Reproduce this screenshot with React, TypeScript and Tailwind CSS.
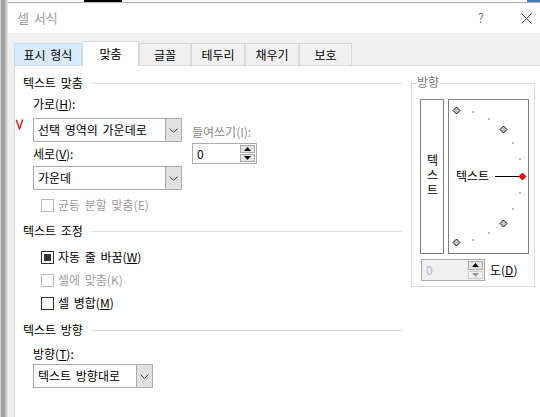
import React from 'react'

const tabs = [
  { label: '표시 형식', cls: 'w-[68px] h-[22px] bg-[#d8eaf9] border-[#c9dff2]' },
  { label: '맞춤', cls: 'w-[57px] h-[25px] bg-white border-[#d9d9d9] -mb-px relative z-10' },
  { label: '글꼴', cls: 'w-[52px] h-[22px] bg-[#f0f0f0] border-[#d9d9d9]' },
  { label: '테두리', cls: 'w-[54px] h-[22px] bg-[#f0f0f0] border-[#d9d9d9]' },
  { label: '채우기', cls: 'w-[54px] h-[22px] bg-[#f0f0f0] border-[#d9d9d9]' },
  { label: '보호', cls: 'w-[53px] h-[22px] bg-[#f0f0f0] border-[#d9d9d9]' },
]

function Chevron() {
  return (
    <svg width="9" height="5" viewBox="0 0 9 5">
      <path d="M0.5 0.5 L4.5 4.5 L8.5 0.5" fill="none" stroke="#505050" strokeWidth="1" />
    </svg>
  )
}

function Select({ value, className }: { value: string; className: string }) {
  return (
    <div className={`flex h-[24px] border border-[#acacac] bg-white ${className}`}>
      <div className="flex-1 flex items-center pl-[4px]">{value}</div>
      <div className="w-[16px] bg-[#e1e1e1] border-l border-[#acacac] flex items-center justify-center">
        <Chevron />
      </div>
    </div>
  )
}

function Arrow({ up, color }: { up: boolean; color: string }) {
  return (
    <svg width="7" height="4" viewBox="0 0 7 4">
      <path d={up ? 'M0 4 L3.5 0 L7 4 Z' : 'M0 0 L3.5 4 L7 0 Z'} fill={color} />
    </svg>
  )
}

function Spin({ disabled, className }: { disabled?: boolean; className: string }) {
  return (
    <div className={`flex border border-[#acacac] ${disabled ? 'bg-[#f0f0f0]' : 'bg-white'} ${className}`}>
      <div className={`flex-1 flex items-center pl-[4px] ${disabled ? 'text-[#a8b8cc]' : 'text-black'}`}>0</div>
      <div className="w-[17px] flex flex-col gap-px p-px">
        <div className="flex-1 bg-[#e5e5e5] border border-[#acacac] flex items-center justify-center">
          <Arrow up color="#000" />
        </div>
        <div className={`flex-1 border flex items-center justify-center ${disabled ? 'bg-[#f0f0f0] border-[#cfcfcf]' : 'bg-[#e5e5e5] border-[#acacac]'}`}>
          <Arrow up={false} color={disabled ? '#9a9a9a' : '#000'} />
        </div>
      </div>
    </div>
  )
}

function Check({ checked, disabled }: { checked?: boolean; disabled?: boolean }) {
  return (
    <div className={`w-[13px] h-[13px] border bg-white flex items-center justify-center ${disabled ? 'border-[#bcbcbc]' : 'border-[#333333]'}`}>
      {checked && <div className="w-[7px] h-[7px] bg-[#333333]" />}
    </div>
  )
}

function CheckRow({ label, checked, disabled, className }: { label: React.ReactNode; checked?: boolean; disabled?: boolean; className: string }) {
  return (
    <div className={`flex items-center h-[18px] pl-[18px] gap-[4px] ${disabled ? 'text-[#a0a0a0]' : 'text-black'} ${className}`}>
      <Check checked={checked} disabled={disabled} />
      <span>{label}</span>
    </div>
  )
}

function Header({ label, className }: { label: string; className: string }) {
  return (
    <div className={`flex items-center h-[18px] ${className}`}>
      <span className="w-[69px] shrink-0">{label}</span>
      <div className="flex-1 h-px bg-[#dcdcdc]" />
    </div>
  )
}

function Dial() {
  const cx = 7
  const cy = 76
  const r = 66
  const pt = (deg: number) => {
    const a = (deg * Math.PI) / 180
    return { x: cx + r * Math.cos(a), y: cy - r * Math.sin(a) }
  }
  const diamonds = [90, 45, -45, -90]
  const dots = [75, 60, 30, 15, -15, -30, -60, -75]
  const red = pt(0)
  return (
    <div className="relative w-[81px] h-[155px] border border-[#828282] bg-white">
      <svg width="79" height="153" className="absolute left-0 top-0">
        {dots.map((d) => {
          const p = pt(d)
          return <rect key={d} x={Math.round(p.x) - 1} y={Math.round(p.y) - 1} width="2" height="2" fill="#c0c0c0" />
        })}
        {diamonds.map((d) => {
          const p = pt(d)
          const x = Math.round(p.x) + 0.5
          const y = Math.round(p.y) + 0.5
          return <path key={d} d={`M${x} ${y - 3.5} L${x + 3.5} ${y} L${x} ${y + 3.5} L${x - 3.5} ${y} Z`} fill="#c4c4c4" stroke="#000" strokeWidth="0.9" />
        })}
        <line x1="46" y1="76.5" x2="70" y2="76.5" stroke="#000" strokeWidth="1" />
        <path d={`M${red.x + 0.5} ${red.y - 3} L${red.x + 4} ${red.y + 0.5} L${red.x + 0.5} ${red.y + 4} L${red.x - 3} ${red.y + 0.5} Z`} fill="#ff0000" stroke="#a00000" strokeWidth="0.8" />
      </svg>
      <span className="absolute left-[7px] top-[67px] leading-[18px]">텍스트</span>
    </div>
  )
}

export default function App() {
  return (
    <div className="w-[540px] h-[417px] flex overflow-hidden bg-white text-[12px] leading-[18px] text-black font-['Noto_Sans_CJK_KR','Noto_Sans',sans-serif] [word-spacing:2px]">
      {/* background window edge */}
      <div className="flex shrink-0 h-full">
        <div className="w-px bg-[#d4d4d4]" />
        <div className="w-[4px] bg-[#a0a0a0]" />
        <div className="w-[2px] bg-[#c6c6c6]" />
        <div className="w-px bg-[#e4e4e4]" />
      </div>

      <div className="flex-1 flex flex-col min-w-0">
        <div className="h-[3px] flex shrink-0 border-b border-[#b4b4b4]">
          <div className="w-[76px]" />
          <div className="w-[38px] h-[2px] bg-black" />
          <div className="flex-1" />
          <div className="w-[13px] bg-[#4a78b4]" />
        </div>

        {/* title bar */}
        <div className="h-[30px] shrink-0 flex items-center bg-white">
          <span className="pl-[9px] text-[13px] text-[#a0a0a0]">셀 서식</span>
          <div className="flex-1" />
          <span className="text-[13px] text-[#7a7a7a] mr-[37px]">?</span>
          <svg width="11" height="11" viewBox="0 0 11 11" className="mr-[8px]">
            <path d="M0.5 0.5 L10.5 10.5 M10.5 0.5 L0.5 10.5" stroke="#555" strokeWidth="1" />
          </svg>
        </div>

        {/* body */}
        <div className="flex-1 flex flex-col bg-[#f0f0f0] pl-[6px] pt-[8px]">
          <div className="flex items-end h-[24px] shrink-0">
            {tabs.map((t) => (
              <div key={t.label} className={`flex items-center justify-center border border-b-0 ${t.cls}`}>
                {t.label}
              </div>
            ))}
          </div>

          <div className="flex-1 flex bg-white border-l border-t border-[#d9d9d9]">
            {/* left column */}
            <div className="w-[387px] shrink-0 flex flex-col pl-[8px]">
              <Header label="텍스트 맞춤" className="mt-[8px]" />
              <div className="h-[18px] mt-[3px] pl-[10px]">
                가로(<u>H</u>):
              </div>
              <div className="flex mt-[5px]">
                <div className="flex flex-col">
                  <div className="flex items-center -ml-[8px]">
                    <svg width="18" height="24" viewBox="0 0 18 24">
                      <path d="M1.5 2.5 L4.5 11 L7.5 2" fill="none" stroke="#e81010" strokeWidth="1.4" strokeLinecap="round" strokeLinejoin="round" />
                    </svg>
                    <Select value="선택 영역의 가운데로" className="w-[149px]" />
                  </div>
                  <div className="h-[18px] mt-[3px] pl-[10px]">
                    세로(<u>V</u>):
                  </div>
                  <div className="pl-[10px] mt-[3px]">
                    <Select value="가운데" className="w-[149px]" />
                  </div>
                </div>
                <div className="flex flex-col ml-[10px]">
                  <div className="h-[18px] mt-[5px] text-[#8a8a8a]">들여쓰기(I):</div>
                  <Spin className="w-[65px] h-[21px] mt-[2px]" />
                </div>
              </div>
              <CheckRow label="균등 분할 맞춤(E)" disabled className="mt-[6px]" />
              <Header label="텍스트 조정" className="mt-[8px]" />
              <CheckRow label={<>자동 줄 바꿈(<u>W</u>)</>} checked className="mt-[8px]" />
              <CheckRow label="셀에 맞춤(K)" disabled className="mt-[5px]" />
              <CheckRow label={<>셀 병합(<u>M</u>)</>} className="mt-[5px]" />
              <Header label="텍스트 방향" className="mt-[9px]" />
              <div className="h-[18px] mt-[6px] pl-[10px]">
                방향(<u>T</u>):
              </div>
              <div className="pl-[10px] mt-px">
                <Select value="텍스트 방향대로" className="w-[120px]" />
              </div>
            </div>

            {/* orientation group */}
            <div className="ml-[9px] mt-[17px]">
              <div className="relative w-[124px] h-[204px] border border-[#dcdcdc] pl-[8px] pt-[15px]">
                <span className="absolute left-[4px] -top-[11px] px-[1px] bg-white text-[#7a7a7a] leading-[18px]">방향</span>
                <div className="flex gap-[4px]">
                  <div className="w-[24px] h-[155px] border border-[#828282] flex items-center justify-center">
                    <span className="[writing-mode:vertical-lr] [text-orientation:upright] tracking-[3px] leading-[22px]">텍스트</span>
                  </div>
                  <Dial />
                </div>
                <div className="flex items-center mt-[5px] ml-px">
                  <Spin disabled className="w-[64px] h-[22px]" />
                  <span className="ml-[5px]">
                    도(<u>D</u>)
                  </span>
                </div>
              </div>
            </div>
          </div>
        </div>
      </div>
    </div>
  )
}
